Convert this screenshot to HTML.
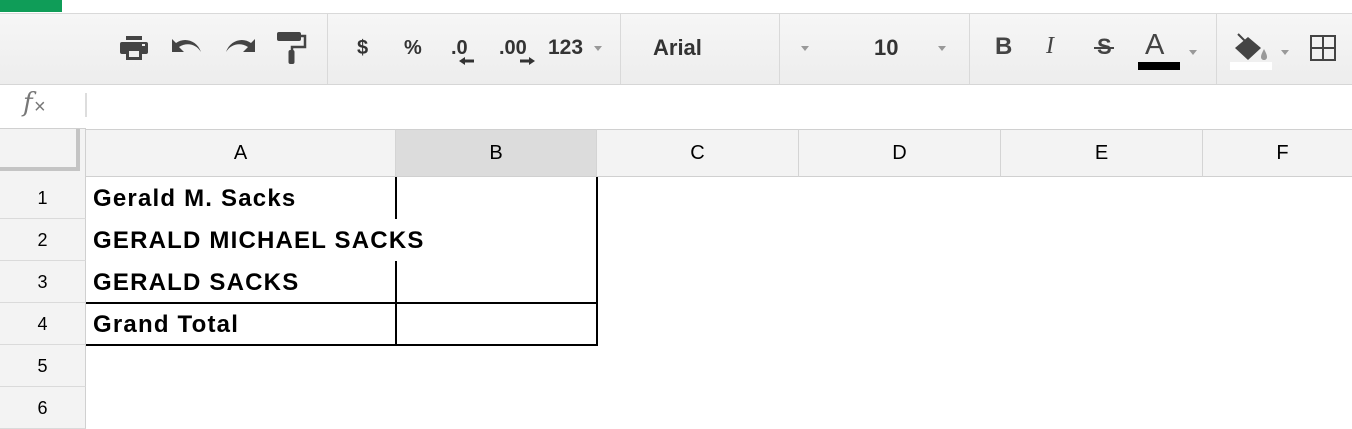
<!DOCTYPE html>
<html><head><meta charset="utf-8"><style>
*{margin:0;padding:0;box-sizing:border-box}
body{width:1352px;height:406px;overflow:hidden;background:#fff;font-family:"Liberation Sans",Arial,sans-serif;position:relative}
.abs{position:absolute}
.tb{top:13px;left:0;width:1352px;height:72px;background:linear-gradient(#f6f6f6,#ededed);border-top:1px solid #d9d9d9;border-bottom:1px solid #d6d6d6}
.sep{top:14px;width:1px;height:70px;background:#d9d9d9}
.t{font-weight:bold;color:#333;font-size:22px;line-height:26px}
.dd{width:0;height:0;border-left:4px solid transparent;border-right:4px solid transparent;border-top:5px solid #999}
.ch{top:129px;height:48px;background:#f3f3f3;border-right:1px solid #d4d4d4;border-bottom:1px solid #d0d0d0;border-top:1px solid #d0d0d0;text-align:center;line-height:46px;font-size:20px;color:#000}
.rh{left:0;width:86px;height:42px;background:#f3f3f3;border-bottom:1px solid #dadada;border-right:1px solid #d0d0d0;text-align:center;line-height:42px;font-size:18px;color:#000}
.cell{left:93px;font-weight:bold;font-size:24px;line-height:42px;color:#000;white-space:nowrap;letter-spacing:1.2px}
.bk{background:#000}
</style></head><body>
<div class="abs" style="left:0;top:0;width:62px;height:12px;background:#0f9d58"></div>
<div class="abs tb"></div>
<div class="abs sep" style="left:327px"></div>
<div class="abs sep" style="left:620px"></div>
<div class="abs sep" style="left:779px"></div>
<div class="abs sep" style="left:969px"></div>
<div class="abs sep" style="left:1216px"></div>
<svg class="abs" style="left:119px;top:34px" width="30" height="28" viewBox="0 0 30 28"><rect x="7" y="2" width="16" height="4" fill="#444"/><rect x="1" y="8" width="28" height="12" rx="2" fill="#444"/><rect x="7" y="15" width="16" height="11" fill="#444"/><rect x="10" y="17" width="10" height="6" fill="#eee"/><rect x="23" y="10" width="3" height="2" fill="#eee"/></svg>
<svg class="abs" style="left:170px;top:36px" width="34" height="20" viewBox="0 0 34 20"><path d="M2 3 L2 16 L14 16 L9 11 C17 6 26 8 31 16 C27 4 14 1 6 7 Z" fill="#444"/></svg>
<svg class="abs" style="left:223px;top:36px" width="34" height="20" viewBox="0 0 34 20"><path d="M32 3 L32 16 L20 16 L25 11 C17 6 8 8 3 16 C7 4 20 1 28 7 Z" fill="#444"/></svg>
<svg class="abs" style="left:277px;top:31px" width="30" height="34" viewBox="0 0 30 34"><rect x="0" y="1" width="24" height="9" rx="2" fill="#444"/><path d="M24 5 H28 V16 H15 V20" stroke="#444" stroke-width="2.5" fill="none"/><rect x="11.5" y="19" width="6" height="14" rx="2" fill="#444"/></svg>
<div class="abs t" style="left:357px;top:35px;font-size:20px">$</div>
<div class="abs t" style="left:404px;top:35px;font-size:20px">%</div>
<div class="abs t" style="left:451px;top:35px;font-size:20px">.0</div>
<svg class="abs" style="left:458px;top:56px" width="18" height="10"><path d="M1 5 L7 1 V3.5 H16 V6.5 H7 V9 Z" fill="#333"/></svg>
<div class="abs t" style="left:499px;top:35px;font-size:20px">.00</div>
<svg class="abs" style="left:518px;top:56px" width="18" height="10"><path d="M17 5 L11 1 V3.5 H2 V6.5 H11 V9 Z" fill="#333"/></svg>
<div class="abs t" style="left:548px;top:35px;font-size:21px">123</div>
<div class="abs dd" style="left:594px;top:46px"></div>
<div class="abs t" style="left:653px;top:35px">Arial</div>
<div class="abs dd" style="left:801px;top:46px"></div>
<div class="abs t" style="left:874px;top:35px">10</div>
<div class="abs dd" style="left:938px;top:46px"></div>
<div class="abs t" style="left:995px;top:34px;font-size:24px;color:#444">B</div>
<div class="abs" style="left:1046px;top:33px;font-size:24px;color:#444;font-style:italic;font-family:'Liberation Serif',serif">I</div>
<div class="abs t" style="left:1097px;top:34px;font-size:22px;color:#444">S</div>
<div class="abs" style="left:1094px;top:47px;width:20px;height:2px;background:#444"></div>
<div class="abs" style="left:1145px;top:29px;font-size:29px;color:#444">A</div>
<div class="abs bk" style="left:1138px;top:62px;width:42px;height:8px"></div>
<div class="abs dd" style="left:1189px;top:50px"></div>
<svg class="abs" style="left:1234px;top:32px" width="40" height="30" viewBox="0 0 40 30"><path d="M4 2 L14 12" stroke="#444" stroke-width="2"/><path d="M1 16 L14 5 L27 16 L14 28 Z" fill="#444"/><path d="M30 17 C28 21 27 23 27 25 C27 29 33 29 33 25 C33 23 32 21 30 17 Z" fill="#999"/></svg>
<div class="abs" style="left:1230px;top:62px;width:42px;height:8px;background:#fff"></div>
<div class="abs dd" style="left:1281px;top:50px"></div>
<svg class="abs" style="left:1309px;top:34px" width="28" height="28"><rect x="2" y="2" width="24" height="24" fill="none" stroke="#444" stroke-width="2"/><path d="M14 2V26M2 14H26" stroke="#444" stroke-width="2"/></svg>
<div class="abs" style="left:23px;top:88px;font-size:26px;color:#777;font-style:italic;font-family:'DejaVu Serif',serif">f</div>
<div class="abs" style="left:34px;top:96px;font-size:20px;color:#777">×</div>
<div class="abs" style="left:85px;top:93px;width:2px;height:24px;background:#ddd"></div>
<div class="abs" style="left:0;top:128px;width:86px;height:50px;background:#f3f3f3;border-top:1px solid #d0d0d0;border-bottom:1px solid #d0d0d0"></div>
<div class="abs" style="left:0;top:129px;width:80px;height:42px;border-right:4px solid #c4c4c4;border-bottom:4px solid #c4c4c4"></div>
<div class="abs" style="left:80px;top:129px;width:6px;height:48px;border-right:1px solid #d0d0d0"></div>
<div class="abs ch" style="left:86px;width:310px">A</div>
<div class="abs ch" style="left:396px;width:201px;background:#dcdcdc">B</div>
<div class="abs ch" style="left:597px;width:202px">C</div>
<div class="abs ch" style="left:799px;width:202px">D</div>
<div class="abs ch" style="left:1001px;width:202px">E</div>
<div class="abs ch" style="left:1203px;width:160px">F</div>
<div class="abs rh" style="top:177px">1</div>
<div class="abs rh" style="top:219px">2</div>
<div class="abs rh" style="top:261px">3</div>
<div class="abs rh" style="top:303px">4</div>
<div class="abs rh" style="top:345px">5</div>
<div class="abs rh" style="top:387px">6</div>
<div class="abs cell" style="top:178px">Gerald M. Sacks</div>
<div class="abs cell" style="top:220px">GERALD MICHAEL SACKS</div>
<div class="abs cell" style="top:262px">GERALD SACKS</div>
<div class="abs cell" style="top:304px">Grand Total</div>
<div class="abs bk" style="left:395px;top:177px;width:2px;height:42px"></div>
<div class="abs bk" style="left:395px;top:261px;width:2px;height:84px"></div>
<div class="abs bk" style="left:596px;top:177px;width:2px;height:169px"></div>
<div class="abs bk" style="left:86px;top:302px;width:512px;height:2px"></div>
<div class="abs bk" style="left:86px;top:344px;width:512px;height:2px"></div>
</body></html>
